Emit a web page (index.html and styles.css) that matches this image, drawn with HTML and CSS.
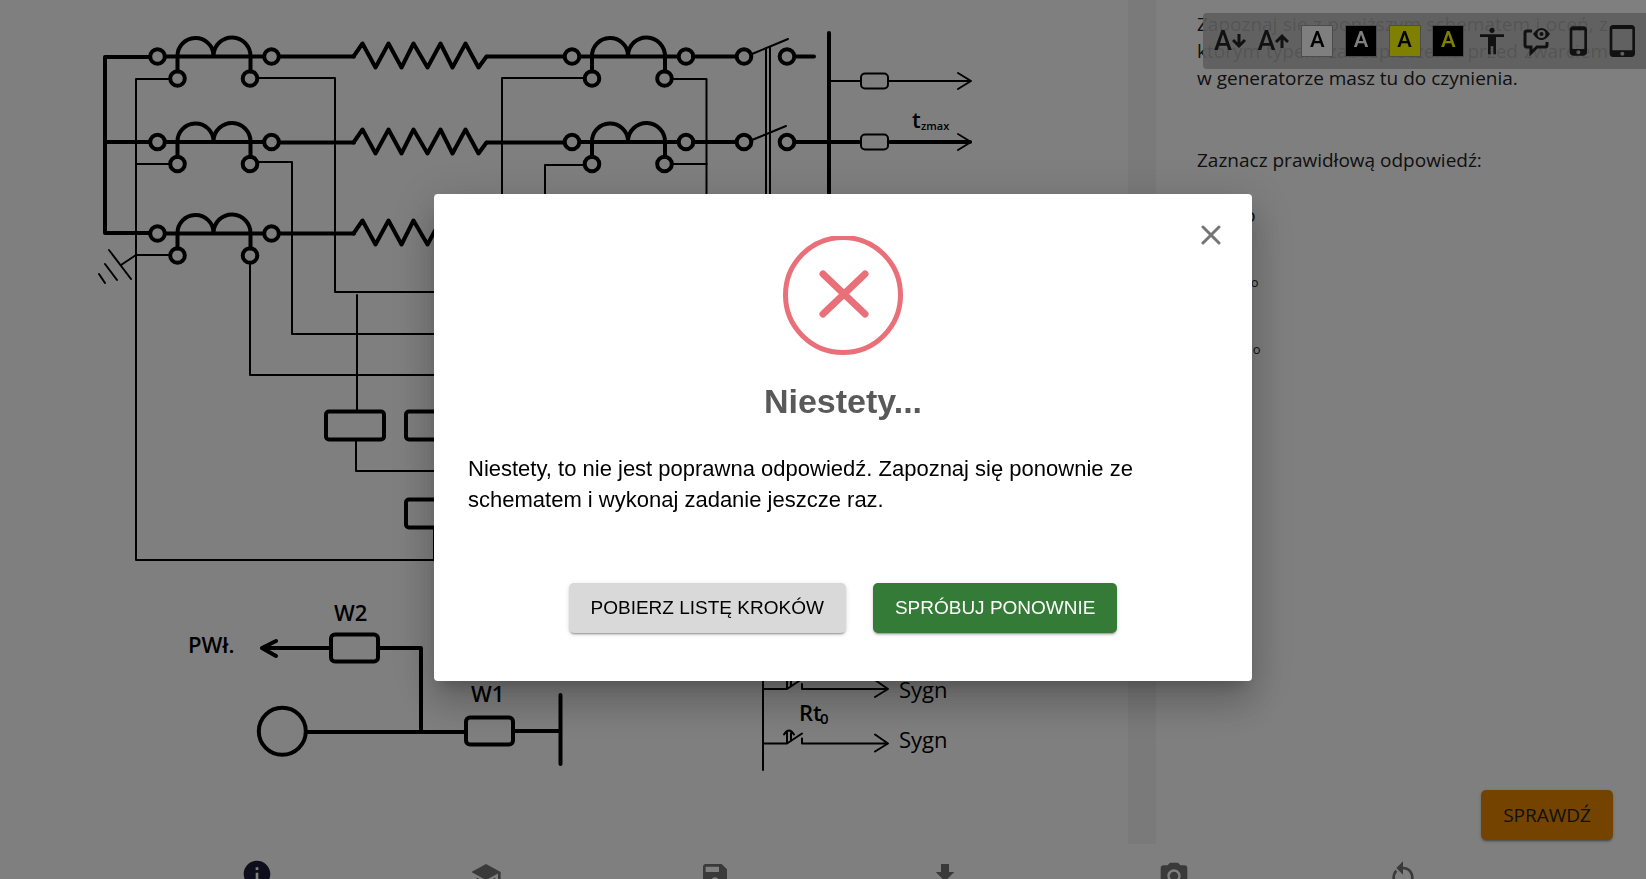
FILE: index.html
```html
<!DOCTYPE html>
<html lang="pl">
<head>
  <meta charset="UTF-8">
  <meta name="viewport" content="width=device-width, initial-scale=1.0">
  <title>Zabezpieczenia generatora</title>
  <link rel="stylesheet" href="styles.css">
</head>
<body>
  <main class="workspace">
    <section class="schema">
      <svg class="schema-svg" viewBox="0 0 1128 844" role="img" aria-label="Schemat zabezpieczenia generatora">
        <defs>
          <!-- current transformer -->
          <g id="ct">
            <path d="M8 0H106M20 15V0A18 18 0 0 1 56 -1A18 18 0 0 1 93 0V15"/>
            <circle cx="0" cy="0" r="7.300"/>
            <circle cx="114" cy="0" r="7.300"/>
            <circle cx="20" cy="22" r="7.300"/>
            <circle cx="92.500" cy="22" r="7.300"/>
          </g>
          <path id="winding" d="M0 0L9 -13L22 11L35 -13L48 11L60 -13L74 11L87 -13L99 11L112 -13L125 11L133 0"/>
          <g id="contact">
            <path d="M0 0H24L39 -10M39 -5V0H125M112 -9L125 0L112 8"/>
            <path d="M21 -9Q26 -17 31 -9M24 -12V-1M28 -12V-3"/>
          </g>
        </defs>

        <g class="thick">
          <path d="M150 57H105V233H150M105 142H150"/>
          <use href="#ct" x="157.500" y="56.500"/>
          <use href="#ct" x="157.500" y="142"/>
          <use href="#ct" x="157.500" y="233.500"/>
          <path d="M279 56.500H354M279 142.500H354M279 233.500H354"/>
          <use href="#winding" x="353.500" y="56.500"/>
          <use href="#winding" x="353.500" y="142.500"/>
          <use href="#winding" x="353.500" y="233.500"/>
          <path d="M487 56.500H564M487 142.500H564"/>
          <use href="#ct" x="572" y="56.500"/>
          <use href="#ct" x="572" y="142"/>
          <path d="M693 56.500H736M693 142H736M795 56.500H814M795 142H859M890 142H970"/>
          <circle cx="744" cy="56.500" r="7.300"/>
          <circle cx="787" cy="56.500" r="7.300"/>
          <circle cx="744" cy="142" r="7.300"/>
          <circle cx="787" cy="142" r="7.300"/>
          <path d="M829 33V240"/>
          <rect x="326" y="411.500" width="58" height="28" rx="3"/>
          <rect x="406" y="411.500" width="58" height="28" rx="3"/>
          <rect x="406" y="499.500" width="58" height="28" rx="3"/>
          <rect x="331" y="634.500" width="47" height="27" rx="4"/>
          <rect x="466" y="717.500" width="47" height="27" rx="4"/>
          <circle cx="282.300" cy="731.300" r="23.500"/>
          <path d="M329 648H263M276 641L262 648L276 656M379 648H421V732M307 732H465M514 731H560M560.500 695V764"/>
        </g>

        <g class="thin">
          <path d="M169 79H136V560H470M136 164H169M169 255H136L121 265"/>
          <path d="M109 250L131 279M105 264L117 280M99 274L105 283"/>
          <path d="M258 78H335V292H470M258 162H292V334H470M250 263V375H470"/>
          <path d="M583 78H502V240M672 79H706.500V240M583 165H545V240M672 164H707"/>
          <path d="M752 54L788 39M752 140L786 126M766 48V240M770 47V240"/>
          <path d="M830 81H861M888 81H971M958 73L971 81L958 89M958 134L971 142L958 150"/>
          <rect x="861" y="73.500" width="27" height="15" rx="4"/>
          <rect x="861" y="134.500" width="27" height="15" rx="4"/>
          <path d="M357 295V410M356 441V471H470M434 529V560"/>
          <path d="M763 660V770"/>
          <use href="#contact" x="763" y="689"/>
          <use href="#contact" x="763" y="743.500"/>
        </g>

        <g class="labels">
          <text x="912" y="128">t</text>
          <text x="921" y="130" class="tiny">zmax</text>
          <text x="334" y="621">W2</text>
          <text x="188" y="653">PWł.</text>
          <text x="471" y="702">W1</text>
          <text x="799" y="721">Rt</text>
          <text x="820" y="724" class="sub">0</text>
          <text x="899" y="698" class="plain">Sygn</text>
          <text x="899" y="748" class="plain">Sygn</text>
        </g>
      </svg>
    </section>

    <section class="task">
      <p class="task-text">Zapoznaj się z poniższym schematem i oceń, z którym typem zabezpieczenia przed zwarciem w&nbsp;generatorze masz tu do czynienia.</p>
      <p class="task-text">Zaznacz prawidłową odpowiedź:</p>
      <div class="answers">
        <label class="answer"><input type="radio" name="answer"> Io</label>
        <label class="answer"><input type="radio" name="answer"> R<small>o</small></label>
        <label class="answer"><input type="radio" name="answer"> U<small>o</small></label>
      </div>
      <button class="btn btn-check" type="button">SPRAWDŹ</button>
    </section>
  </main>

  <nav class="bottom-nav">
    <button class="nav-item active" type="button" aria-label="Informacje">
      <svg viewBox="0 0 24 24"><path d="M12 2C6.48 2 2 6.48 2 12s4.480 10 10 10 10-4.480 10-10S17.520 2 12 2zm1 15h-2v-6h2v6zm0-8h-2V7h2v2z"/></svg>
    </button>
    <button class="nav-item" type="button" aria-label="Nauka">
      <svg viewBox="0 0 24 24"><path d="M5 13.180v4L12 21l7-3.820v-4L12 17l-7-3.820zM12 3L1 9l11 6 9-4.910V17h2V9L12 3z"/></svg>
    </button>
    <button class="nav-item" type="button" aria-label="Zapisz">
      <svg viewBox="0 0 24 24"><path d="M17 3H5c-1.110 0-2 .9-2 2v14c0 1.100.89 2 2 2h14c1.100 0 2-.9 2-2V7l-4-4zm-5 16c-1.660 0-3-1.340-3-3s1.340-3 3-3 3 1.340 3 3-1.340 3-3 3zm3-10H5V5h10v4z"/></svg>
    </button>
    <button class="nav-item" type="button" aria-label="Pobierz">
      <svg viewBox="0 0 24 24"><path d="M19 9h-4V3H9v6H5l7 7 7-7zM5 18v2h14v-2H5z"/></svg>
    </button>
    <button class="nav-item" type="button" aria-label="Zrzut ekranu">
      <svg viewBox="0 0 24 24"><circle cx="12" cy="12" r="3.2"/><path d="M9 2L7.170 4H4c-1.100 0-2 .9-2 2v12c0 1.100.9 2 2 2h16c1.100 0 2-.9 2-2V6c0-1.100-.9-2-2-2h-3.170L15 2H9zm3 15c-2.760 0-5-2.240-5-5s2.240-5 5-5 5 2.240 5 5-2.240 5-5 5z"/></svg>
    </button>
    <button class="nav-item" type="button" aria-label="Od nowa">
      <svg viewBox="0 0 24 24"><path d="M12 5V1L7 6l5 5V7c3.310 0 6 2.690 6 6s-2.690 6-6 6v2c4.420 0 8-3.580 8-8s-3.580-8-8-8zM6 13c0-1.650.67-3.150 1.760-4.240L6.340 7.340C4.900 8.790 4 10.790 4 13c0 4.080 3.050 7.440 7 7.930v-2.020c-2.830-.48-5-2.940-5-5.910z"/></svg>
    </button>
  </nav>

  <div class="a11y-bar">
    <button class="a11y-btn font-size" type="button" aria-label="Zmniejsz tekst">
      <span>A</span><svg viewBox="0 0 14 16"><path d="M7 1V13M1 7L7 13L13 7"/></svg>
    </button>
    <button class="a11y-btn font-size" type="button" aria-label="Powiększ tekst">
      <span>A</span><svg viewBox="0 0 14 16"><path d="M7 15V3M1 9L7 3L13 9"/></svg>
    </button>
    <button class="a11y-btn" type="button"><span class="contrast normal">A</span></button>
    <button class="a11y-btn" type="button"><span class="contrast white-black">A</span></button>
    <button class="a11y-btn" type="button"><span class="contrast black-yellow">A</span></button>
    <button class="a11y-btn" type="button"><span class="contrast yellow-black">A</span></button>
    <button class="a11y-btn" type="button" aria-label="Dostępność">
      <svg class="icon" viewBox="0 0 24 24"><path d="M12 2c1.100 0 2 .9 2 2s-.9 2-2 2-2-.9-2-2 .9-2 2-2zm9 7h-6v13h-2v-6h-2v6H9V9H3V7h18v2z"/></svg>
    </button>
    <button class="a11y-btn" type="button" aria-label="Opis alternatywny">
      <svg class="icon" viewBox="0 0 32 32">
        <path class="outline" d="M12 6H7Q5 6 5 8V20Q5 22 7 22H11V28L17 22H25Q27 22 27 20V17"/>
        <path fill-rule="evenodd" d="M13 9Q17 3 21.500 3T30 9Q26 15 21.500 15T13 9zM21.500 5a4 4 0 1 0 0 8a4 4 0 1 0 0-8zM21.500 7a2 2 0 1 1 0 4a2 2 0 1 1 0-4z"/>
      </svg>
    </button>
    <button class="a11y-btn" type="button" aria-label="Widok telefonu">
      <svg class="icon" viewBox="0 0 24 24"><path d="M15.500 1h-8C6.120 1 5 2.120 5 3.500v17C5 21.880 6.120 23 7.500 23h8c1.380 0 2.500-1.120 2.500-2.500v-17C18 2.120 16.880 1 15.500 1zm-4 21c-.83 0-1.500-.67-1.500-1.500s.67-1.500 1.500-1.500 1.500.67 1.500 1.500-.67 1.500-1.500 1.500zm4.500-4H7V4h9v14z"/></svg>
    </button>
    <button class="a11y-btn" type="button" aria-label="Widok tabletu">
      <svg class="icon" viewBox="0 0 24 24"><path d="M18.500 0h-14C3.120 0 2 1.120 2 2.500v19C2 22.880 3.120 24 4.500 24h14c1.380 0 2.500-1.120 2.500-2.500v-19C21 1.120 19.880 0 18.500 0zm-7 23c-.83 0-1.500-.67-1.500-1.500s.67-1.500 1.500-1.500 1.500.67 1.500 1.500-.67 1.500-1.500 1.500zm7.500-4H4V3h15v16z"/></svg>
    </button>
  </div>

  <div class="backdrop">
    <div class="modal" role="dialog" aria-modal="true" aria-labelledby="modal-title">
      <button class="modal-close" type="button" aria-label="Zamknij">
        <svg viewBox="0 0 20 20"><path d="M2 2L18 18M18 2L2 18"/></svg>
      </button>
      <svg class="modal-icon" viewBox="0 0 120 120">
        <circle cx="60" cy="59" r="57.500"/>
        <path d="M40 38L82 78M82 38L40 78"/>
      </svg>
      <h2 class="modal-title" id="modal-title">Niestety...</h2>
      <p class="modal-text">Niestety, to nie jest poprawna odpowiedź. Zapoznaj się ponownie ze schematem i wykonaj zadanie jeszcze raz.</p>
      <div class="modal-actions">
        <button class="btn btn-grey" type="button">POBIERZ LISTĘ KROKÓW</button>
        <button class="btn btn-green" type="button">SPRÓBUJ PONOWNIE</button>
      </div>
    </div>
  </div>
</body>
</html>
```

FILE: styles.css
```css
* {
  box-sizing: border-box;
}
body {
  margin: 0;
  height: 100vh;
  overflow: hidden;
  background: #fff;
  color: #222;
  font-family: "Open Sans", sans-serif;
}
button {
  border: 0;
  padding: 0;
  background: none;
  color: inherit;
  font-family: inherit;
  cursor: pointer;
}
svg {
  display: block;
}

/* Workspace */
.workspace {
  display: flex;
  height: calc(100vh - 35px);
}
.schema {
  flex: 1;
  border-right: 28px solid #f4f4f4;
}
.schema-svg {
  width: 100%;
}
.thick,
.thin {
  fill: none;
  stroke: #000;
  stroke-linecap: round;
  stroke-linejoin: round;
}
.thick {
  stroke-width: 4px;
}
.thin {
  stroke-width: 2px;
}
.labels {
  font-size: 22px;
  font-weight: 600;
}
.labels .tiny {
  font-size: 11px;
}
.labels .sub {
  font-size: 15px;
}
.labels .plain {
  font-weight: 400;
}
.task {
  display: flex;
  flex-direction: column;
  width: 490px;
  padding: 11px 33px 4px 41px;
}
.task-text {
  margin: 0 5px 55px 0;
  font-size: 19px;
  line-height: 27px;
  text-align: justify;
}
.answers {
  display: flex;
  flex-direction: column;
  gap: 38px;
  margin-top: -27px;
}
.answer {
  font-size: 19px;
  line-height: 27px;
}
.answer input {
  margin: 0 24px 0 0;
}
.answer small {
  font-size: 13px;
}

/* Buttons */
.btn {
  height: 50px;
  padding: 0 22px;
  border-radius: 5px;
  font-size: 19px;
  box-shadow: 0 3px 1px -2px rgba(0, 0, 0, 0.2), 0 2px 2px rgba(0, 0, 0, 0.14), 0 1px 5px rgba(0, 0, 0, 0.12);
}
.btn-check {
  align-self: flex-end;
  margin-top: auto;
  background: #e98700;
}
.btn-grey {
  background: #d9d9d9;
  color: #000;
}
.btn-green {
  background: #347b38;
  color: #fff;
}

/* Bottom navigation */
.bottom-nav {
  display: grid;
  grid-template-columns: repeat(6, 1fr);
  height: 64px;
  padding: 0 128px 0 142px;
}
.nav-item {
  display: flex;
  justify-content: center;
  padding-top: 16px;
}
.nav-item svg {
  width: 32px;
  height: 32px;
  fill: #757575;
}
.nav-item.active {
  padding-top: 14px;
}
.nav-item.active svg {
  fill: #1e1c38;
}

/* Accessibility toolbar */
.a11y-bar {
  position: fixed;
  top: 13px;
  right: 0;
  display: grid;
  grid-template-columns: repeat(10, 1fr);
  width: 443px;
  height: 56px;
  padding: 0 1px 0 5px;
  border-radius: 4px 0 0 4px;
  background: rgba(186, 186, 186, 0.89);
}
.a11y-btn {
  display: flex;
  align-items: center;
  justify-content: center;
  font-family: Roboto, sans-serif;
}
.font-size {
  font-size: 27px;
  font-weight: 500;
}
.font-size svg {
  width: 14px;
  height: 16px;
  fill: none;
  stroke: #222;
  stroke-width: 3px;
}
.contrast {
  width: 32px;
  height: 32px;
  border: 1px solid #999;
  font-size: 22px;
  font-weight: 500;
  line-height: 28px;
}
.normal {
  background: #fff;
  color: #000;
}
.white-black {
  background: #000;
  color: #fff;
}
.black-yellow {
  background: #ff0;
  color: #000;
}
.yellow-black {
  background: #000;
  color: #ff0;
}
.icon {
  width: 32px;
  height: 32px;
  fill: #222;
}
.icon .outline {
  fill: none;
  stroke: #222;
  stroke-width: 3px;
}

/* Modal */
.backdrop {
  position: fixed;
  inset: 0;
  display: flex;
  align-items: center;
  justify-content: center;
  padding: 0 0 4px 40px;
  background: rgba(0, 0, 0, 0.5);
}
.modal {
  position: relative;
  width: 100%;
  max-width: 818px;
  padding: 42px 34px 48px;
  border-radius: 4px;
  background: #fff;
  color: #000;
  font-family: "Liberation Sans", Arial, sans-serif;
  box-shadow: 0 11px 15px -7px rgba(0, 0, 0, 0.2), 0 24px 38px 3px rgba(0, 0, 0, 0.14), 0 9px 46px 8px rgba(0, 0, 0, 0.12);
}
.modal-close {
  position: absolute;
  top: 21px;
  right: 21px;
  padding: 10px;
}
.modal-close svg {
  width: 20px;
  height: 20px;
  stroke: #757575;
  stroke-width: 3px;
  stroke-linecap: round;
}
.modal-icon {
  width: 120px;
  height: 120px;
  margin: 0 auto;
  fill: none;
  stroke: #e96f78;
  stroke-width: 5px;
  stroke-linecap: round;
}
.modal-icon path {
  stroke-width: 7px;
}
.modal-title {
  margin: 24px 0 31px;
  color: #595959;
  font-size: 34px;
  line-height: 42px;
  text-align: center;
}
.modal-text {
  margin: 0 0 68px;
  font-size: 22px;
  line-height: 31px;
}
.modal-actions {
  display: flex;
  justify-content: center;
  gap: 27px;
}
```
